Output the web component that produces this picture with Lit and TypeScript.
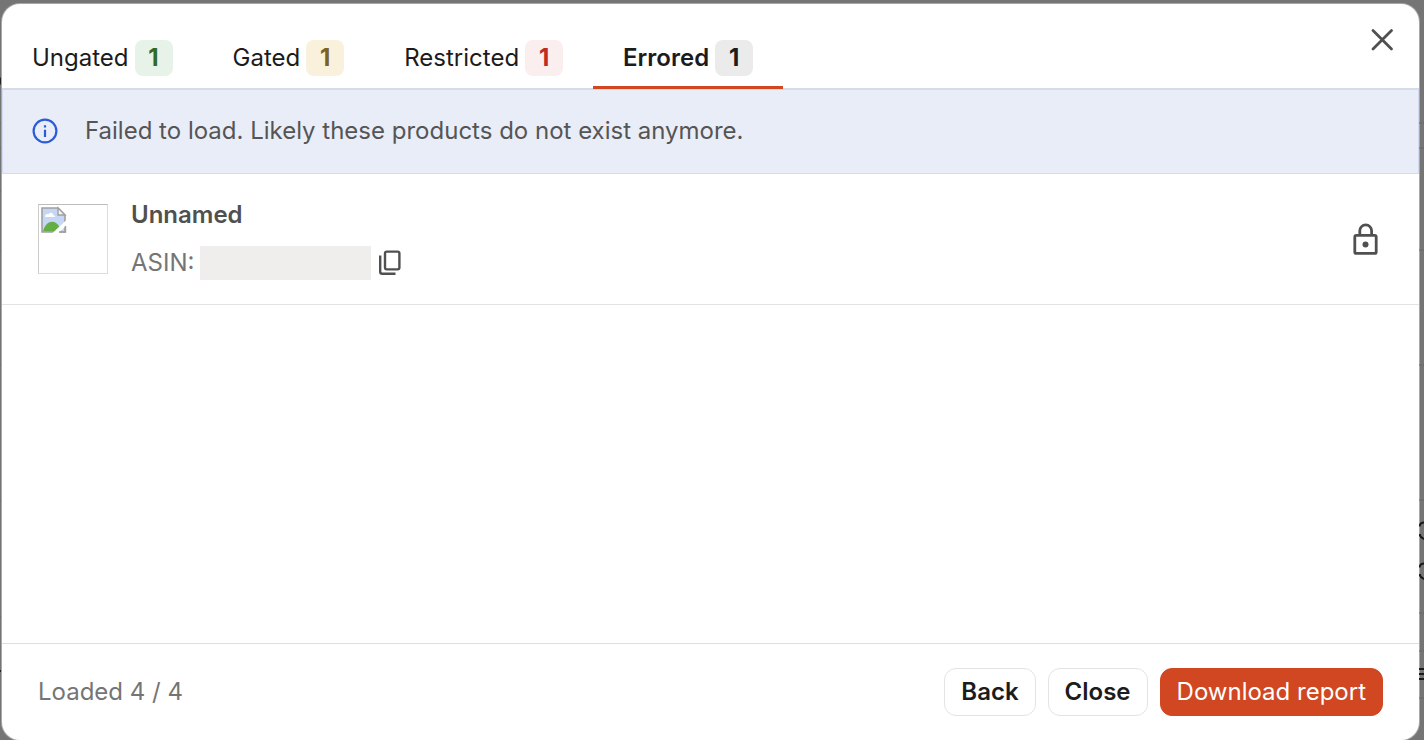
import { LitElement, html, css, svg } from "lit";
import { customElement, property, state } from "lit/decorators.js";
import { classMap } from "lit/directives/class-map.js";

interface Tab {
  id: string;
  label: string;
  count: number;
}

const TABS: Tab[] = [
  { id: "ungated", label: "Ungated", count: 1 },
  { id: "gated", label: "Gated", count: 1 },
  { id: "restricted", label: "Restricted", count: 1 },
  { id: "errored", label: "Errored", count: 1 },
];

@customElement("product-row")
class ProductRow extends LitElement {
  @property() name = "";

  static styles = css`
    :host {
      display: flex;
      align-items: center;
      gap: 23px;
      padding: 24px 36px;
      border-bottom: 1px solid #e3e3e3;
    }
    .thumb {
      flex: none;
      box-sizing: border-box;
      width: 70px;
      height: 70px;
      padding: 1px;
      border: 1px solid #dcdcdc;
      border-top-color: #bdbdbd;
      border-left-color: #cccccc;
    }
    .thumb svg,
    button svg,
    .lock {
      display: block;
    }
    .info {
      flex: 1;
      display: grid;
      gap: 14px;
      line-height: 34px;
    }
    .name {
      margin: 0;
      font-size: 24px;
      font-weight: 600;
      line-height: 34px;
      color: #505050;
    }
    .asin {
      display: flex;
      align-items: center;
      color: #757575;
    }
    .value {
      width: 171px;
      height: 34px;
      margin: 0 6px;
      background: #efeeec;
    }
    button {
      padding: 0;
      border: 0;
      background: none;
      color: #505050;
    }
    .lock {
      color: #505050;
    }
  `;

  render() {
    return html`
      <div class="thumb" role="img" aria-label="Product image">
        <svg width="28" height="28" viewBox="0 0 28 28">
          <path d="M2 2h16l7 7v17H2z" fill="#c5d7f5" stroke="#a0a0a0" stroke-width="1.6" />
          <path d="M5 10.500c0-2 2-3 3.500-2 1-3 5-2 5 1 1.500 0 2 1 1.500 1.500H5.500z" fill="#fff" />
          <path d="M3 25.200c3-11 12-12 16-5l3 5.200z" fill="#63ae45" />
          <path d="M18 2v7h7z" fill="#f4f4f4" stroke="#a0a0a0" stroke-width="1.400" />
          <path d="M12 27.500 27 13.500v5l-8.500 9z" fill="#fff" />
          <path d="M19 26h6.500v-6" fill="none" stroke="#a0a0a0" stroke-width="1.400" />
        </svg>
      </div>
      <div class="info">
        <h3 class="name">${this.name}</h3>
        <div class="asin">
          ASIN:
          <span class="value"></span>
          <button aria-label="Copy ASIN">
            <svg width="26" height="26" viewBox="0 0 26 26" fill="none" stroke="currentColor" stroke-width="2.400">
              <rect x="8" y="1.600" width="14.400" height="17.800" rx="1.800" />
              <path d="M3.200 5.500v16.200q0 2 2 2h13.300" />
            </svg>
          </button>
        </div>
      </div>
      <svg class="lock" width="34" height="34" viewBox="0 0 34 34" fill="none" stroke="currentColor" stroke-width="2.800">
        <rect x="5.800" y="13.400" width="21.400" height="18" rx="1.500" />
        <path d="M10.800 13v-4.200a5.900 5.900 0 0 1 11.800 0V13" />
        <circle cx="16.500" cy="22.500" r="3" fill="currentColor" stroke="none" />
      </svg>
    `;
  }
}

@customElement("app-root")
class AppRoot extends LitElement {
  @state() private active = "errored";

  static styles = css`
    :host {
      display: grid;
      grid-template-columns: 2px 1fr 5px;
      box-sizing: border-box;
      min-height: 100vh;
      padding-top: 4px;
      background: #757575;
      font-family: Inter, sans-serif;
      font-size: 24px;
      line-height: 36px;
      color: #1c1c1c;
    }
    .edge {
      display: block;
      overflow: hidden;
    }
    .dialog {
      display: flex;
      flex-direction: column;
      overflow: hidden;
      border-radius: 18px;
      background: #fff;
      box-shadow: 0 0 0 1px #a8a8a8;
    }
    header {
      display: flex;
      align-items: flex-start;
      justify-content: space-between;
      border-bottom: 2px solid #d5dce9;
    }
    .tabs {
      display: flex;
      margin-bottom: -1px;
    }
    button {
      font: inherit;
      color: inherit;
      cursor: pointer;
    }
    .tab {
      display: flex;
      align-items: center;
      gap: 6px;
      padding: 36px 30px 10px;
      border: 0;
      border-bottom: 3px solid transparent;
      background: none;
    }
    .tab.active {
      border-color: #d04722;
      font-weight: 600;
    }
    .count {
      box-sizing: border-box;
      width: 38px;
      border-radius: 8px;
      font-weight: 700;
      text-align: center;
    }
    .ungated {
      background: #e7f2e8;
      color: #2e6b27;
    }
    .gated {
      background: #f9f1dc;
      color: #7a6420;
    }
    .restricted {
      background: #fbeeee;
      color: #c02a26;
    }
    .errored {
      background: #ebebeb;
      color: #1c1c1c;
    }
    .close {
      margin: 20px 20px 0 0;
      padding: 0;
      border: 0;
      background: none;
      color: #505050;
    }
    .close svg,
    .notice svg {
      display: block;
    }
    .notice {
      display: flex;
      align-items: center;
      gap: 26px;
      padding: 23px 28px 24px;
      border: 1px solid #d2dbf2;
      border-top: 0;
      background: #e9edf8;
      color: #555;
    }
    .notice p {
      margin: 0;
    }
    main {
      flex: 1;
    }
    footer {
      display: flex;
      align-items: center;
      justify-content: space-between;
      padding: 24px 36px;
      border-top: 1px solid #dedede;
      color: #757575;
    }
    .actions {
      display: flex;
      gap: 12px;
      color: #1c1c1c;
    }
    .action {
      padding: 5px 16px;
      border: 1px solid #e3e3e3;
      border-radius: 12px;
      background: #fff;
      font-weight: 600;
    }
    .primary {
      border-color: #d04722;
      background: #d04722;
      color: #fff;
      font-weight: 400;
    }
  `;

  private renderEdgeLines(rows: number[], width: number) {
    return rows.map((y) => svg`<path d="M0 ${y}h${width}" stroke="#686868" />`);
  }

  render() {
    return html`
      <svg class="edge" width="2" height="736" aria-hidden="true">
        ${this.renderEdgeLines([119, 144, 187, 247, 361, 497, 613], 2)}
        <path d="M2 73q-3 4 0 8M0 667h2" fill="none" stroke="#222" stroke-width="2" />
      </svg>
      <section class="dialog" role="dialog" aria-label="Product eligibility">
        <header>
          <div class="tabs" role="tablist">
            ${TABS.map(
              (tab) => html`
                <button
                  role="tab"
                  class=${classMap({ tab: true, active: tab.id === this.active })}
                  aria-selected=${tab.id === this.active}
                  @click=${() => (this.active = tab.id)}
                >
                  ${tab.label}<span class="count ${tab.id}">${tab.count}</span>
                </button>
              `,
            )}
          </div>
          <button class="close" aria-label="Close dialog">
            <svg width="32" height="32" viewBox="0 0 32 32" fill="none" stroke="currentColor" stroke-width="2.800">
              <path d="M6 6.500l18.500 18.500M24.500 6.500l-18.500 18.500" stroke-linecap="round" />
            </svg>
          </button>
        </header>
        <div class="notice" role="status">
          <svg width="28" height="28" viewBox="0 0 28 28" aria-hidden="true">
            <circle cx="14" cy="14" r="11.400" fill="none" stroke="#2b5bd7" stroke-width="2.200" />
            <path d="M14 12.800v7.200M14 8.200v2.200" stroke="#2b5bd7" stroke-width="2.200" />
          </svg>
          <p>Failed to load. Likely these products do not exist anymore.</p>
        </div>
        <main>
          <product-row name="Unnamed"></product-row>
        </main>
        <footer>
          <span>Loaded 4 / 4</span>
          <div class="actions">
            <button class="action">Back</button>
            <button class="action">Close</button>
            <button class="action primary">Download report</button>
          </div>
        </footer>
      </section>
      <svg class="edge" width="5" height="736" aria-hidden="true">
        ${this.renderEdgeLines([119, 144, 246, 361, 496, 609, 647, 694], 5)}
        <g fill="none" stroke="#1a1a1a" stroke-width="2">
          <path d="M5 518.500q-4 0-4.500 4M.5 530q1 4 4.500 5M5 559.500q-4 0-4.500 4M.5 570q1 4 4.500 5" />
          <path d="M0 665h5M0 670h5M0 675h5" />
        </g>
      </svg>
    `;
  }
}
